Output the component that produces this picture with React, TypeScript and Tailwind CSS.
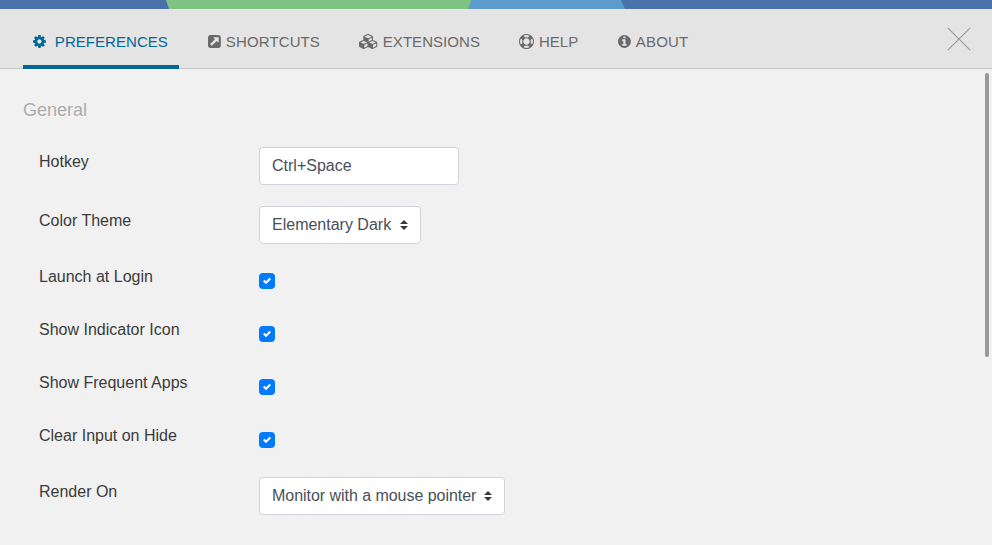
import type { ReactNode } from 'react';

const COG =
  'M1024 896q0-106-75-181t-181-75-181 75-75 181 75 181 181 75 181-75 75-181zm512-109v222q0 12-8 23t-20 13l-185 28q-19 54-39 91 35 50 107 138 10 12 10 25t-9 23q-27 37-99 108t-94 71q-12 0-26-9l-138-108q-44 23-91 38-16 136-29 186-7 28-36 28h-222q-14 0-24.5-8.5t-11.5-21.5l-28-184q-49-16-90-37l-141 107q-10 9-25 9-14 0-25-11-126-114-165-168-7-10-7-23 0-12 8-23 15-21 51-66.5t54-70.5q-27-50-41-99l-183-27q-13-2-21-12.5t-8-23.5v-222q0-12 8-23t19-13l186-28q14-46 39-92-40-57-107-138-10-12-10-24 0-10 9-23 26-36 98.5-107.5t94.5-71.5q13 0 26 10l138 107q44-23 91-38 16-136 29-186 7-28 36-28h222q14 0 24.5 8.5t11.5 21.5l28 184q49 16 90 37l142-107q9-9 24-9 13 0 25 10 129 119 165 170 7 8 7 22 0 12-8 23-15 21-51 66.5t-54 70.5q26 50 41 98l183 28q13 2 21 12.5t8 23.5z';
const EXTERNAL =
  'M1280 928v-480q0-26-19-45t-45-19h-480q-42 0-59 39-17 41 14 70l144 144-534 534q-19 19-19 45t19 45l102 102q19 19 45 19t45-19l534-534 144 144q18 19 45 19 12 0 25-5 39-17 39-59zm256-512v960q0 119-84.5 203.5t-203.5 84.5h-960q-119 0-203.5-84.5t-84.5-203.5v-960q0-119 84.5-203.5t203.5-84.5h960q119 0 203.5 84.5t84.5 203.5z';
const CUBES =
  'M640 1632l384-192v-314l-384 164v342zm-64-454l404-173-404-173-404 173zm1088 454l384-192v-314l-384 164v342zm-64-454l404-173-404-173-404 173zm-448-293l384-165v-266l-384 164v267zm-64-379l441-189-441-189-441 189zm1088 518v416q0 36-19 67t-52 47l-448 224q-25 14-57 14t-57-14l-448-224q-4-2-7-4-2 2-7 4l-448 224q-25 14-57 14t-57-14l-448-224q-33-16-52-47t-19-67v-416q0-38 21.5-70t56.5-48l434-186v-400q0-38 21.5-70t56.5-48l448-192q23-10 50-10t50 10l448 192q35 16 56.5 48t21.5 70v400l434 186q36 16 57 48t21 70z';
const RING =
  'M896 0q182 0 348 71t286 191 191 286 71 348-71 348-191 286-286 191-348 71-348-71-286-191-191-286-71-348 71-348 191-286 286-191 348-71zm0 128q-190 0-361 90l194 194q82-28 167-28t167 28l194-194q-171-90-361-90zm-678 1129l194-194q-28-82-28-167t28-167l-194-194q-90 171-90 361t90 361zm678 407q190 0 361-90l-194-194q-82 28-167 28t-167-28l-194 194q171 90 361 90zm0-384q159 0 271.5-112.5t112.5-271.5-112.5-271.5-271.5-112.5-271.5 112.5-112.5 271.5 112.5 271.5 271.5 112.5zm484-217l194 194q90-171 90-361t-90-361l-194 194q28 82 28 167t-28 167z';
const INFO =
  'M1024 1376v-160q0-14-9-23t-23-9h-96v-512q0-14-9-23t-23-9h-320q-14 0-23 9t-9 23v160q0 14 9 23t23 9h96v320h-96q-14 0-23 9t-9 23v160q0 14 9 23t23 9h448q14 0 23-9t9-23zm-128-896v-160q0-14-9-23t-23-9h-192q-14 0-23 9t-9 23v160q0 14 9 23t23 9h192q14 0 23-9t9-23zm640 416q0 209-103 385.5t-279.5 279.5-385.5 103-385.5-103-279.5-279.5-103-385.5 103-385.5 279.5-279.5 385.5-103 385.5 103 279.5 279.5 103 385.5z';

const tabs = [
  { label: 'PREFERENCES', path: COG, units: 1536, size: 'w-[156px] gap-[9px] tracking-[0.05px]', active: true },
  { label: 'SHORTCUTS', path: EXTERNAL, units: 1536, size: 'w-[132px] gap-[5px] tracking-[0.12px]', active: false },
  { label: 'EXTENSIONS', path: CUBES, units: 2304, size: 'w-[141px] gap-[4.500px] tracking-[0.05px]', active: false },
  { label: 'HELP', path: RING, units: 1792, size: 'w-[80px] gap-[5px]', active: false },
  { label: 'ABOUT', path: INFO, units: 1536, size: 'w-[100px] gap-[5px] tracking-[0.15px]', active: false },
];

function Row({
  label,
  className,
  labelClass = 'pt-[3px]',
  children,
}: {
  label: string;
  className: string;
  labelClass?: string;
  children: ReactNode;
}) {
  return (
    <div className={`flex items-start pl-4 ${className}`}>
      <div className={`w-[220px] leading-6 ${labelClass}`}>{label}</div>
      {children}
    </div>
  );
}

function Select({ value, className }: { value: string; className: string }) {
  return (
    <button
      className={`flex h-[38px] items-center justify-between rounded border border-[#ced4da] bg-white px-3 text-[#495057] ${className}`}
    >
      <span className="whitespace-nowrap">{value}</span>
      <svg className="h-[10px] w-2 shrink-0" viewBox="0 0 4 5" fill="#343a40">
        <path d="M2 0L0 2h4zm0 5L0 3h4z" />
      </svg>
    </button>
  );
}

function Checkbox() {
  return (
    <span role="checkbox" aria-checked="true" className="mt-2 flex size-4 items-center justify-center rounded bg-[#007bff]">
      <svg className="size-2" viewBox="0 0 8 8" fill="#fff">
        <path d="M6.564.75l-3.59 3.612-1.538-1.55L0 4.26 2.974 7.25 8 2.193z" />
      </svg>
    </span>
  );
}

export default function App() {
  return (
    <div className="flex h-[545px] w-[992px] flex-col overflow-hidden bg-[#f1f1f1] font-['Liberation_Sans',Arial,sans-serif] text-base text-[#3b3b3b]">
      <svg className="h-[9px] w-full shrink-0" viewBox="0 0 992 9">
        <path fill="#4a72aa" d="M0 0h992v9H0z" />
        <path fill="#7fc382" d="M166 0h306l-3.500 9H169z" />
        <path fill="#5c9bcc" d="M471 0h150l4 9H468.500z" />
      </svg>
      <header className="flex h-[60px] shrink-0 items-stretch justify-between border-b border-[#c8c8c8] bg-[#e4e4e4] pr-[21px] pl-[23px]">
        <nav className="-mb-px flex gap-[19px] text-[15px]">
          {tabs.map((t) => (
            <a
              key={t.label}
              className={`flex items-center border-b-4 pt-[9px] pl-[10px] ${t.size} ${
                t.active ? 'border-[#006798] text-[#006798]' : 'border-transparent text-[#6a6a6a]'
              }`}
            >
              <svg
                className="h-[15px] shrink-0"
                style={{ width: (t.units / 1792) * 15 }}
                viewBox={`0 0 ${t.units} 1792`}
                fill="currentColor"
              >
                <path d={t.path} />
              </svg>
              <span className="pt-[2px]">{t.label}</span>
            </a>
          ))}
        </nav>
        <svg className="mt-[18px] size-6" viewBox="0 0 24 24" fill="none" stroke="#999" strokeWidth="1.1">
          <path d="M.8.800l22.400 22.400M23.200.8L.8 23.200" />
        </svg>
      </header>
      <div className="flex min-h-0 grow justify-between">
        <main className="pt-[27px] pl-[23px]">
          <h2 className="h-[51px] text-lg leading-7 text-[#aaa] [text-shadow:0_1px_0_#fff]">General</h2>
          <Row label="Hotkey" className="h-[59px]">
            <div className="flex h-[38px] w-[200px] items-center rounded border border-[#ced4da] bg-white px-3 text-[#495057]">
              Ctrl+Space
            </div>
          </Row>
          <Row label="Color Theme" className="h-[59px]">
            <Select value="Elementary Dark" className="w-[162px]" />
          </Row>
          {['Launch at Login', 'Show Indicator Icon', 'Show Frequent Apps', 'Clear Input on Hide'].map((label) => (
            <Row key={label} label={label} className="h-[53px]" labelClass="pt-0">
              <Checkbox />
            </Row>
          ))}
          <Row label="Render On" className="">
            <Select value="Monitor with a mouse pointer" className="w-[246px] tracking-[-0.04px]" />
          </Row>
        </main>
        <div className="mt-1 mr-[3px] h-[284px] w-1 rounded-full bg-[#999]" />
      </div>
    </div>
  );
}
